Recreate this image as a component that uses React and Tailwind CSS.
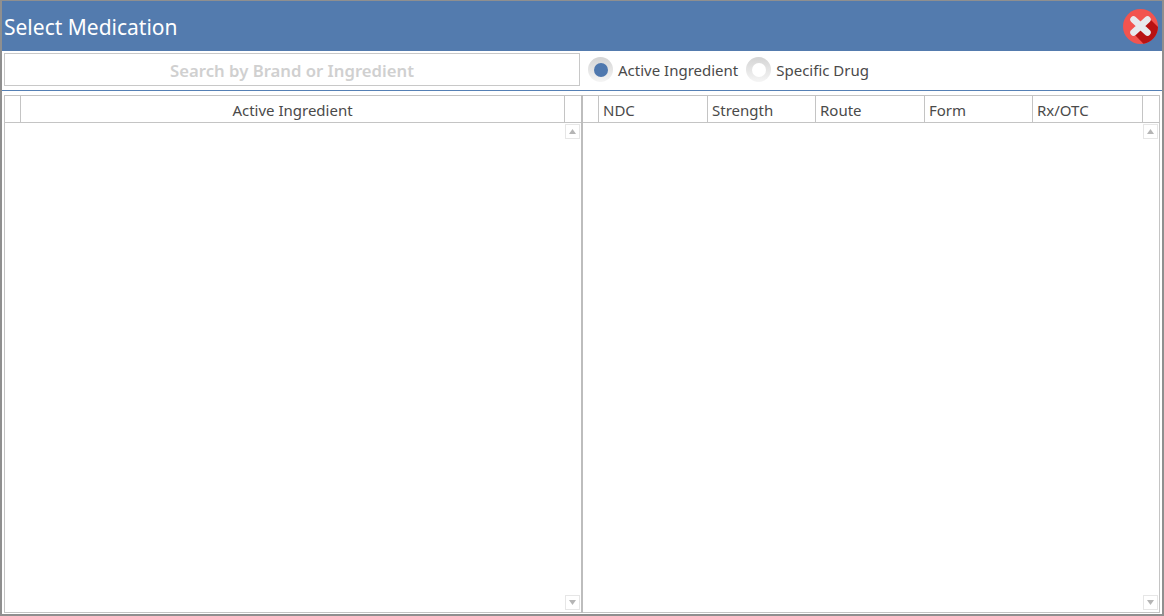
import React from "react";

function CloseIcon() {
  return (
    <svg width="35" height="35" viewBox="0 0 35 35" className="block">
      <circle cx="17.5" cy="17.5" r="17.5" fill="#f2544f" />
      <path d="M26 9 L35 18 A17.5 17.5 0 0 1 20.5 34.8 L10 24 Z" fill="#b81212" />
      <path d="M10.5 10.5 L24.5 23.5 M24.5 10.5 L10.5 23.5" fill="none" stroke="#e7eaee" strokeWidth="6.5" strokeLinecap="round" />
    </svg>
  );
}

function Radio({ checked, label }) {
  return (
    <div className="flex items-center gap-[5px]">
      <span className="flex h-[25px] w-[25px] items-center justify-center rounded-full bg-gradient-to-b from-[#d4d4d4] to-[#f5f5f5]">
        {checked ? (
          <span className="h-[14px] w-[14px] rounded-full bg-[#4f78ae]" />
        ) : (
          <span className="h-[14px] w-[14px] rounded-full bg-white blur-[0.5px]" />
        )}
      </span>
      <span className="text-[15px] leading-5 text-[#4a4a4a]">{label}</span>
    </div>
  );
}

function ScrollButton({ up }) {
  return (
    <div className="flex h-[15px] w-[15px] items-center justify-center border border-[#e6e6e6] bg-white">
      <svg width="7" height="5" viewBox="0 0 7 5">
        <path d={up ? "M3.5 0 L7 5 L0 5 Z" : "M0 0 L7 0 L3.5 5 Z"} fill="#b5b5b5" />
      </svg>
    </div>
  );
}

function Cell({ width, children, center, last }) {
  return (
    <div
      className={`flex h-full shrink-0 items-center pt-[2px] text-[15px] text-[#4a4a4a] ${last ? "" : "border-r border-[#c4c4c4]"} ${center ? "justify-center" : "pl-1"} ${width}`}
    >
      {children}
    </div>
  );
}

export default function App() {
  return (
    <div
      className="flex h-[616px] w-[1164px] flex-col overflow-hidden border-t border-r-2 border-b-2 border-l-2 border-[#8f8f8f] bg-white"
      style={{ fontFamily: '"Noto Sans", sans-serif' }}
    >
      <header className="flex h-[50px] shrink-0 items-center justify-between bg-[#537bae] pr-1 pl-[2px]">
        <h1 className="pt-1 text-[21px] font-normal text-white">Select Medication</h1>
        <CloseIcon />
      </header>

      <div className="flex h-[40px] shrink-0 items-start border-b border-[#5580b5] pt-[2px] pl-[2px]">
        <div className="flex h-[33px] w-[576px] items-center justify-center border border-[#c8c8c8] pt-[2px] text-[16.7px] font-semibold text-[#d0d0d0]">
          Search by Brand or Ingredient
        </div>
        <div className="ml-2 flex h-[33px] items-center gap-2">
          <Radio checked label="Active Ingredient" />
          <Radio label="Specific Drug" />
        </div>
      </div>

      <div className="flex min-h-0 flex-1 pt-[4px] pr-[2px] pb-[1px] pl-[2px]">
        <section className="flex w-[577px] shrink-0 flex-col border-t border-b border-l border-[#c4c4c4]">
          <div className="flex h-[27px] shrink-0 border-b border-[#c4c4c4]">
            <Cell width="w-[16px]" />
            <Cell width="w-[544px]" center>Active Ingredient</Cell>
            <Cell width="flex-1" last />
          </div>
          <div className="flex flex-1 flex-col items-end justify-between pt-[1px] pr-[1px] pb-[2px]">
            <ScrollButton up />
            <ScrollButton />
          </div>
        </section>

        <div className="w-[2px] shrink-0 bg-[#bdbdbd]" />

        <section className="flex min-w-0 flex-1 flex-col border-t border-r border-b border-[#c4c4c4]">
          <div className="flex h-[27px] shrink-0 border-b border-[#c4c4c4]">
            <Cell width="w-[16px]" />
            <Cell width="w-[109px]">NDC</Cell>
            <Cell width="w-[108px]">Strength</Cell>
            <Cell width="w-[109px]">Route</Cell>
            <Cell width="w-[108px]">Form</Cell>
            <Cell width="w-[110px]">Rx/OTC</Cell>
            <Cell width="flex-1" last />
          </div>
          <div className="flex flex-1 flex-col items-end justify-between pt-[1px] pr-[1px] pb-[2px]">
            <ScrollButton up />
            <ScrollButton />
          </div>
        </section>
      </div>
    </div>
  );
}
